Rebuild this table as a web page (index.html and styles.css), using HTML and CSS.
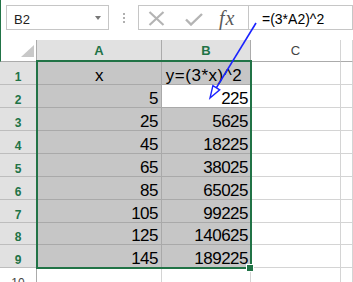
FILE: index.html
```html
<!DOCTYPE html>
<html>
<head>
<meta charset="utf-8">
<link rel="stylesheet" href="styles.css">
</head>
<body>
<div class="app">
  <div class="toolbar">
    <div class="namebox"><span class="ref">B2</span><span class="caret"></span></div>
    <div class="grip"><i></i><i></i><i></i></div>
    <div class="fxbox">
      <svg class="ic-x" width="17" height="15" viewBox="0 0 17 15"><path d="M1.5 1 L15.5 14 M15.5 1 L1.5 14" stroke="#b4b4b4" stroke-width="2.2" fill="none"/></svg>
      <svg class="ic-check" width="18" height="13" viewBox="0 0 18 13"><path d="M1 6.5 L6 11.5 L17 1" stroke="#b4b4b4" stroke-width="2.4" fill="none"/></svg>
      <span class="fx">fx</span>
    </div>
    <div class="formula">=(3*A2)^2</div>
  </div>
  <div class="sheet">
    <div class="corner"><span class="tri"></span></div>
    <div class="ch sel">A</div>
    <div class="ch sel">B</div>
    <div class="ch">C</div>
    <div class="ch"></div>

    <div class="rh">1</div><div class="cell d s ctr">x</div><div class="cell d s ctr wide">y=(3*x)^2</div><div class="cell"></div><div class="cell"></div>
    <div class="rh">2</div><div class="cell d s">5</div><div class="cell d s b active">225</div><div class="cell"></div><div class="cell"></div>
    <div class="rh">3</div><div class="cell d s">25</div><div class="cell d s b">5625</div><div class="cell"></div><div class="cell"></div>
    <div class="rh">4</div><div class="cell d s">45</div><div class="cell d s b">18225</div><div class="cell"></div><div class="cell"></div>
    <div class="rh">5</div><div class="cell d s">65</div><div class="cell d s b">38025</div><div class="cell"></div><div class="cell"></div>
    <div class="rh">6</div><div class="cell d s">85</div><div class="cell d s b">65025</div><div class="cell"></div><div class="cell"></div>
    <div class="rh">7</div><div class="cell d s">105</div><div class="cell d s b">99225</div><div class="cell"></div><div class="cell"></div>
    <div class="rh">8</div><div class="cell d s">125</div><div class="cell d s b">140625</div><div class="cell"></div><div class="cell"></div>
    <div class="rh">9</div><div class="cell d s">145</div><div class="cell d s b">189225</div><div class="cell"></div><div class="cell"></div>
    <div class="rh plain">10</div><div class="cell"></div><div class="cell"></div><div class="cell"></div><div class="cell"></div>
  </div>
  <div class="selection"><span class="handle"></span></div>
  <svg class="arrow" width="353" height="282" viewBox="0 0 353 282">
    <line x1="256" y1="23" x2="216.3" y2="87.8" stroke="#1a22ff" stroke-width="1.6"/>
    <polygon points="210,98 219.7,89.9 212.9,85.7" fill="#fff" stroke="#1a22ff" stroke-width="1.4" stroke-linejoin="miter"/>
  </svg>
</div>
</body>
</html>
```
FILE: styles.css
```css
* { box-sizing: border-box; margin: 0; padding: 0; }
html, body { width: 353px; height: 282px; overflow: hidden; background: #fff; }
body { font-family: "Liberation Sans", Arial, sans-serif; color: #000; }
.app { position: relative; width: 353px; height: 282px; overflow: hidden; }

.toolbar { height: 40px; display: flex; align-items: flex-start; padding: 5px 0 0 5px; border-left: 1px solid #217346; }
.namebox { width: 103px; height: 25px; border: 1px solid #c6c6c6; display: flex; align-items: center; justify-content: space-between; padding: 3px 7px 0 7px; font-size: 13px; color: #222; }
.caret { width: 0; height: 0; border-left: 3px solid transparent; border-right: 3px solid transparent; border-top: 4px solid #777; margin-top: -3px; }
.grip { width: 29px; display: flex; flex-direction: column; align-items: center; gap: 2px; padding-top: 8px; }
.grip i { display: block; width: 2px; height: 2px; background: #b0b0b0; }
.fxbox { width: 111px; height: 25px; border: 1px solid #c6c6c6; display: flex; align-items: center; padding-left: 9px; }
.ic-x { margin-top: 2px; }
.ic-check { margin-left: 20px; margin-top: 4px; }
.fx { margin-left: 16px; font-family: "Liberation Serif", "Times New Roman", serif; font-style: italic; font-size: 20px; letter-spacing: 1px; color: #5a5a5a; line-height: 20px; margin-top: 1px; }
.formula { flex: 1; height: 25px; border: 1px solid #c6c6c6; border-left: none; padding: 4px 0 0 13px; font-size: 14px; line-height: 18px; white-space: nowrap; }

.sheet { display: grid; grid-template-columns: 37px 125px 89px 90px 1fr; grid-template-rows: 22px repeat(7, 23px) 22px 23px 23px; }
.corner { border-left: 1px solid #217346; border-right: 1px solid #ababab; border-bottom: 1px solid #ababab; background: #fff; display: flex; justify-content: flex-end; align-items: flex-end; padding: 0 2px 4px 0; }
.tri { width: 0; height: 0; border-left: 13px solid transparent; border-bottom: 12px solid #c8c8c8; }
.ch { display: flex; align-items: center; justify-content: center; font-size: 13px; color: #444; background: #fff; border-right: 1px solid #d4d4d4; border-bottom: 1px solid #ababab; }
.ch.sel { background: #e1e1e1; color: #217346; font-weight: bold; border-right-color: #ababab; border-bottom-color: #217346; padding-bottom: 1px; }
.rh { display: flex; justify-content: center; align-items: flex-end; font-size: 12px; font-weight: bold; line-height: 14px; color: #217346; background: #e1e1e1; border-right: 1px solid #217346; border-bottom: 1px solid #bdbdbd; }
.rh.plain { background: #fff; color: #444; font-weight: normal; border-right-color: #ababab; border-bottom-color: #d4d4d4; }
.cell { border-right: 1px solid #d4d4d4; border-bottom: 1px solid #d4d4d4; }
.d { display: flex; justify-content: flex-end; align-items: flex-end; font-size: 17px; line-height: 17px; letter-spacing: -0.5px; padding-right: 3px; white-space: nowrap; overflow: hidden; }
.d.b { padding-right: 2px; }
.d.ctr { justify-content: center; padding-right: 0; }
.d.wide { letter-spacing: 0.5px; padding-right: 4px; }
.s { background: #c6c6c6; border-color: #a9a9a9; }
.s.active { background: #fff; }

.selection { position: absolute; left: 36px; top: 60px; width: 216px; height: 209px; border: 2px solid #217346; }
.handle { position: absolute; left: 208px; top: 202px; width: 8px; height: 8px; background: #217346; border: 1px solid #fff; }
.arrow { position: absolute; left: 0; top: 0; pointer-events: none; }
```
